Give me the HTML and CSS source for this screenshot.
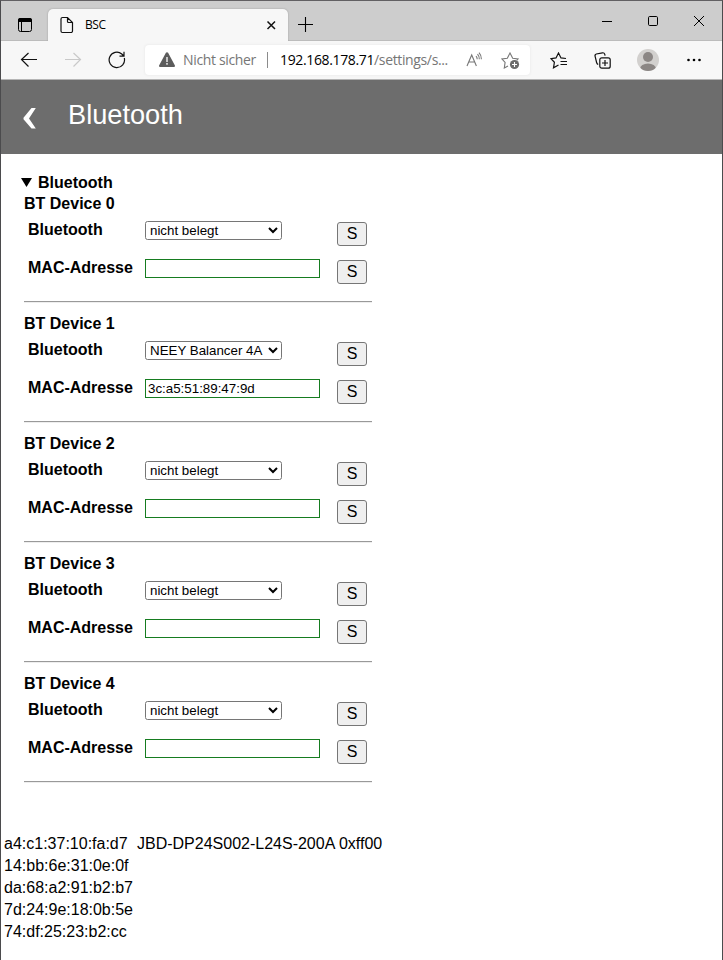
FILE: index.html
```html
<!DOCTYPE html>
<html lang="de">
<head>
<meta charset="utf-8">
<title>BSC</title>
<link rel="stylesheet" href="styles.css">
</head>
<body>
<div class="window">
  <div class="tabstrip">
    <svg class="tabmenu" width="16" height="16" viewBox="0 0 16 16"><rect x="1.5" y="1.5" width="13" height="13" rx="2" fill="none" stroke="#000"/><path d="M1 5V3a2 2 0 0 1 2-2h10a2 2 0 0 1 2 2v2z"/><path d="M4.5 5v9.500" stroke="#000"/></svg>
    <div class="tab">
      <svg width="14" height="18" viewBox="0 0 14 18" fill="none" stroke="#111" stroke-width="1.200"><path d="M2.500 1.500h5l5 5v8.500a1.500 1.500 0 0 1-1.500 1.500H2.500a1.500 1.500 0 0 1-1.500-1.500v-12a1.500 1.500 0 0 1 1.500-1.500zM7.500 1.500V5.500a1 1 0 0 0 1 1h4"/></svg>
      <span class="tab-title">BSC</span>
      <svg class="tab-close" width="10" height="10" viewBox="0 0 10 10" stroke="#111" stroke-width="1.500"><path d="M1.500 1.500l7.500 7.500M9 1.500l-7.500 7.500"/></svg>
    </div>
    <svg class="newtab" width="15" height="15" viewBox="0 0 15 15" stroke="#000" stroke-width="1.100"><path d="M7.500 0v15M0 7.500h15"/></svg>
    <div class="controls">
      <svg width="12" height="12" viewBox="0 0 12 12" stroke="#000"><path d="M1 6.500h10"/></svg>
      <svg width="12" height="12" viewBox="0 0 12 12" fill="none" stroke="#000"><rect x="1.500" y="1.500" width="9" height="9" rx="1.200"/></svg>
      <svg width="12" height="12" viewBox="0 0 12 12" stroke="#000"><path d="M1 1l10 10M11 1L1 11"/></svg>
    </div>
  </div>
  <div class="toolbar">
    <svg class="back" width="18" height="16" viewBox="0 0 18 16" fill="none" stroke="#111" stroke-width="1.200"><path d="M17 7.500H1.500M8.500 1L1.500 7.500l7 7"/></svg>
    <svg class="forward" width="18" height="16" viewBox="0 0 18 16" fill="none" stroke="#c9c9c9" stroke-width="1.200"><path d="M1 7.500h15.500M9.500 1l7 6.500-7 7"/></svg>
    <svg class="reload" width="18" height="18" viewBox="0 0 18 18" fill="none" stroke="#111" stroke-width="1.200"><path d="M16.300 7A7.700 7.700 0 1 1 13.800 3L15.800 5M16 .8V5.200h-4.500"/></svg>
    <div class="address">
      <svg class="warn" width="16" height="15" viewBox="0 0 16 15"><path d="M6.900.8a1.250 1.250 0 0 1 2.200 0l6.700 12.400a1.200 1.200 0 0 1-1.100 1.800H1.300a1.200 1.200 0 0 1-1.100-1.800z" fill="#5c5c5c"/><path d="M8 5v5M8 11v1.700" stroke="#fff" stroke-width="1.300"/></svg>
      <span class="insecure">Nicht sicher</span>
      <span class="sep"></span>
      <span class="url"><b>192.168.178.71</b>/settings/s...</span>
      <svg class="read" width="18" height="16" viewBox="0 0 18 16" fill="none" stroke="#777" stroke-width="1.100"><path d="M1 14L5.700 3l4.700 11M2.700 10h6M10 4.200a4 4 0 0 1 1.200 3M11.500 2.200a7 7 0 0 1 1.800 5M13 .6a9 9 0 0 1 2.400 6.600"/></svg>
      <svg class="fav" width="19" height="18" viewBox="0 0 19 18" fill="none" stroke="#777" stroke-width="1.100"><path d="M7 14l-3.700 2 .8-5.600L1 7l5.300-.8L9 1l2.700 5.200L17 7l-1.200 1.300"/><circle cx="13.500" cy="12.500" r="4.600" fill="#6b6b6b" stroke="none"/><path d="M13.500 10v5M11 12.500h5" stroke="#fff"/></svg>
    </div>
    <svg class="favorites" width="18" height="17" viewBox="0 0 18 17" fill="none" stroke="#111" stroke-width="1.200"><path d="M8.500 13l-5 2.800.9-5.500L1 6.700l5-.8L8.500 1 11 5.900l5 .6M10.500 9.500H17M10.500 12.500H17"/></svg>
    <svg class="collections" width="17" height="17" viewBox="0 0 17 17" fill="none" stroke="#111" stroke-width="1.200"><rect x="5.800" y="5.800" width="10.400" height="10.400" rx="2"/><path d="M11 8v6M8 11h6M4.200 12.500A3 3 0 0 1 2.600 10.500L1 4a1.800 1.800 0 0 1 1.300-2L8.500.8a2 2 0 0 1 2.200 1.400l.4 1.500"/></svg>
    <svg class="profile" width="22" height="22" viewBox="0 0 22 22"><defs><clipPath id="disc"><circle cx="11" cy="11" r="11"/></clipPath></defs><circle cx="11" cy="11" r="11" fill="#d2d0ce"/><g fill="#8b8684" clip-path="url(#disc)"><circle cx="11" cy="8" r="5"/><ellipse cx="11" cy="20" rx="8" ry="5.500"/></g></svg>
    <svg class="more" width="14" height="4" viewBox="0 0 14 4"><circle cx="1.500" cy="2" r="1.300"/><circle cx="7" cy="2" r="1.300"/><circle cx="12.500" cy="2" r="1.300"/></svg>
  </div>
  <header class="header">
    <svg width="14" height="21" viewBox="0 0 14 21"><path d="M8.500 0H12.800L6 10.500l6.800 10H8.500L.5 11.200V9.800z" fill="#fff"/></svg>
    <h1>Bluetooth</h1>
  </header>
  <main>
    <div class="summary"><svg width="11" height="9" viewBox="0 0 11 9"><path d="M0 0h11L5.500 9z"/></svg>Bluetooth</div>
    <section class="device">
      <h2>BT Device 0</h2>
      <div class="row"><label>Bluetooth</label><select><option>nicht belegt</option></select><button>S</button></div>
      <div class="row"><label>MAC-Adresse</label><input type="text"><button>S</button></div>
      <hr>
    </section>
    <section class="device">
      <h2>BT Device 1</h2>
      <div class="row"><label>Bluetooth</label><select><option>NEEY Balancer 4A</option></select><button>S</button></div>
      <div class="row"><label>MAC-Adresse</label><input type="text" value="3c:a5:51:89:47:9d"><button>S</button></div>
      <hr>
    </section>
    <section class="device">
      <h2>BT Device 2</h2>
      <div class="row"><label>Bluetooth</label><select><option>nicht belegt</option></select><button>S</button></div>
      <div class="row"><label>MAC-Adresse</label><input type="text"><button>S</button></div>
      <hr>
    </section>
    <section class="device">
      <h2>BT Device 3</h2>
      <div class="row"><label>Bluetooth</label><select><option>nicht belegt</option></select><button>S</button></div>
      <div class="row"><label>MAC-Adresse</label><input type="text"><button>S</button></div>
      <hr>
    </section>
    <section class="device">
      <h2>BT Device 4</h2>
      <div class="row"><label>Bluetooth</label><select><option>nicht belegt</option></select><button>S</button></div>
      <div class="row"><label>MAC-Adresse</label><input type="text"><button>S</button></div>
      <hr>
    </section>
    <div class="scan">
      <div><span class="mac">a4:c1:37:10:fa:d7</span><span>JBD-DP24S002-L24S-200A 0xff00</span></div>
      <div>14:bb:6e:31:0e:0f</div>
      <div>da:68:a2:91:b2:b7</div>
      <div>7d:24:9e:18:0b:5e</div>
      <div>74:df:25:23:b2:cc</div>
    </div>
  </main>
</div>
</body>
</html>
```
FILE: styles.css
```css
* { box-sizing: border-box; }
body { margin: 0; background: #fff; font: 16px/18px "Liberation Sans", Arial, sans-serif; color: #000; }
svg { display: block; flex: none; }
.window { width: 723px; height: 960px; overflow: hidden; border: 1px solid #4b4b4d; border-top-color: #626063; border-bottom: 0; }
.tabstrip { display: flex; height: 40px; background: #cdcdcd; border-bottom: 1px solid #bcbcbc; }
.tabmenu { margin: 16px 0 0 16px; }
.tab { display: flex; width: 240px; height: 32px; margin: 8px 0 -1px 15px; padding-left: 12px; background: #f7f7f7; border-radius: 5px 5px 0 0; box-shadow: 0 0 2px #999; clip-path: inset(-3px -3px 0 -3px); }
.tab > svg:first-child { margin-top: 7px; }
.tab-title { margin: 7px 0 0 11px; width: 21px; font: 12px/18px "Open Sans", sans-serif; letter-spacing: -.4px; white-space: nowrap; }
.tab .tab-close { margin: 11px 0 0 160px; }
.newtab { margin: 16px 0 0 10px; }
.controls { display: flex; gap: 34px; margin: 14px 0 0 288px; }
.toolbar { display: flex; height: 39px; background: #f7f7f7; border-bottom: 1px solid #b5b5b5; }
.back { margin: 11px 0 0 19px; }
.forward { margin: 11px 0 0 26px; }
.reload { margin: 10px 0 0 26px; }
.address { display: flex; width: 385px; height: 30px; margin: 4px 0 0 19px; background: #fff; border-radius: 4px; box-shadow: 0 0 3px #e4e4e4; font: 14px/30px "Open Sans", sans-serif; white-space: nowrap; color: #767676; }
.warn { margin: 7px 0 0 14px; }
.insecure { width: 73px; margin-left: 8px; letter-spacing: -.35px; }
.sep { width: 1px; height: 16px; margin: 7px 0 0 11px; background: #8b8b8b; }
.url { width: 170px; margin-left: 12px; letter-spacing: -.36px; }
.url b { font-weight: 400; color: #000; }
.read { margin: 7px 0 0 16px; }
.fav { margin: 7px 0 0 17px; }
.favorites { margin: 11px 0 0 20px; }
.collections { margin: 11px 0 0 26px; }
.profile { margin: 8px 0 0 26px; }
.more { margin: 17px 0 0 28px; }
.header { display: flex; height: 74px; background: #6d6d6d; color: #fff; }
.header svg { margin: 28px 0 0 22px; }
.header h1 { margin: 19px 0 0 31px; font-size: 27.2px; line-height: 31px; font-weight: 400; }
.summary { display: flex; height: 21px; margin: 20px 0 0 20px; font-weight: 700; }
.summary svg { margin: 4px 6px 0 0; }
.device { width: 348px; height: 120px; margin-left: 23px; font-weight: 700; }
.device h2 { margin: 0 0 5px; font-size: 16px; line-height: 18px; }
.row { display: flex; align-items: flex-start; height: 38px; }
.row label { width: 121px; padding: 3px 0 0 4px; }
.row select { width: 137px; height: 19px; margin: 3px 0 0; padding: 0; border: 1px solid #767676; border-radius: 2.5px; background-color: #fff; color: #000; font: 13.333px "Liberation Sans", sans-serif; }
.row input { width: 175px; height: 19px; margin: 3px 0 0; padding: 1px 2px; border: 1px solid #167c20; border-radius: 0; background: #fff; color: #000; font: 13.333px "Liberation Sans", sans-serif; }
.row button { width: 30px; height: 24px; margin: 4px 5px 0 auto; padding: 0; border: 1px solid #767676; border-radius: 3px; background: #efefef; color: #000; font: 16px/18px "Liberation Sans", sans-serif; }
.device hr { height: 2px; margin: 7px 0 0; border: 0; border-top: 1px solid #999; border-bottom: 1px solid #eee; }
.scan { margin: 38px 0 0 3px; line-height: 22px; }
.scan div { display: flex; }
.mac { width: 133px; }
```
